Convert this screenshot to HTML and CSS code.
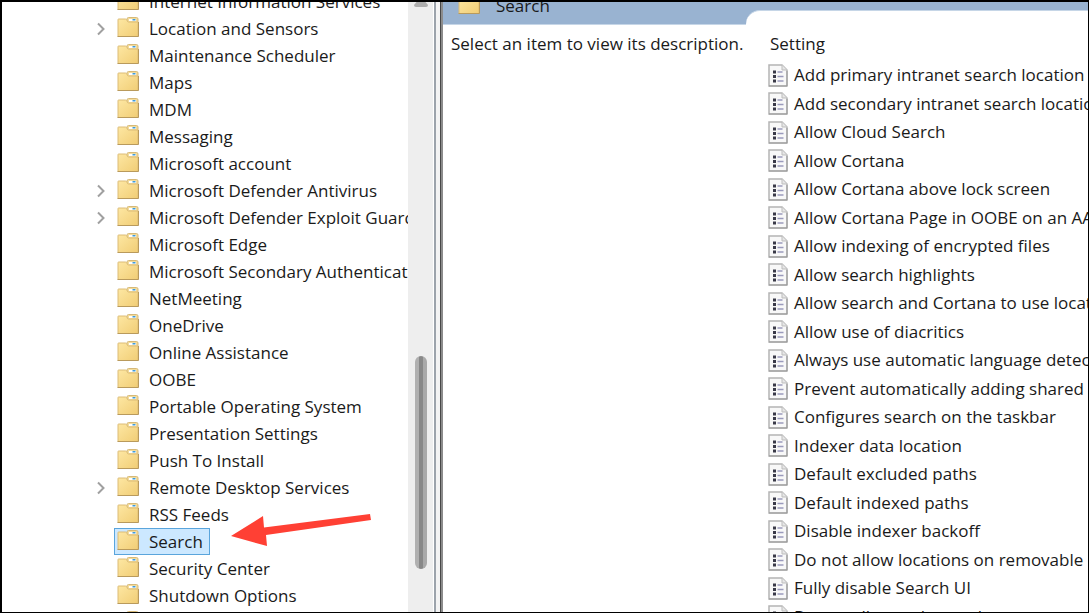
FILE: index.html
```html
<!DOCTYPE html>
<html lang="en">
<head>
  <meta charset="UTF-8">
  <title>Local Group Policy Editor</title>
  <meta name="viewport" content="width=device-width, initial-scale=1.0" />
  <link rel="stylesheet" href="styles.css">
</head>
<body>

<!-- Shared icons -->
<svg class="icon-defs" aria-hidden="true">
  <defs>
    <linearGradient id="folderFill" x1="0" y1="0" x2="1" y2="1">
      <stop offset="0" stop-color="#fde7a3" />
      <stop offset="1" stop-color="#f1cd75" />
    </linearGradient>
    <symbol id="folder" viewBox="0 0 22 20">
      <path d="M10 5V2q0-1.500 1.500-1.500h8q1.500 0 1.500 1.500v4H10z" fill="#f3dc9c" stroke="#d6b978" />
      <path d="M12 2h7v2h-7z" fill="#fff" />
      <path d="M15.500 2h3v1.500h-3z" fill="#3f9bd8" />
      <path d="M1 2.500q0-.5.5-.5h7q1 0 1.500 1.500t1.500 1.500h9.500v14.500H1z" fill="url(#folderFill)" stroke="#dcbc77" />
      <path d="M.5 19.500h21V5" fill="none" stroke="#b99a5c" />
    </symbol>
    <symbol id="policy" viewBox="0 0 20 23">
      <path d="M1 1h13l5 5v16H1z" fill="#f8f8f8" stroke="#b4b4b4" stroke-width="1.500" />
      <path d="M14 1v5h5" fill="#e6e6e6" stroke="#bdbdbd" />
      <path d="M1 22h18V7" fill="none" stroke="#999" />
      <path d="M5 6.500h3v3H5zM5 11h3v3H5zM5 15.500h3v3H5z" fill="#3a3a48" />
      <path d="M9.500 8h5M9.500 12.500h6M9.500 17h6" stroke="#9a9abc" stroke-width="1.300" />
    </symbol>
    <symbol id="chevron" viewBox="0 0 10 14">
      <path d="M2 1.500l5.500 5.500L2 12.500" fill="none" stroke="#a0a0a0" stroke-width="2" />
    </symbol>
  </defs>
</svg>

<div class="window">
  <nav class="tree-pane" aria-label="Policy folders">
    <ul class="tree">
      <li><span class="toggle"></span><a href="#"><svg class="folder"><use href="#folder" /></svg>Internet Information Services</a></li>
      <li><button class="toggle" aria-label="Expand"><svg><use href="#chevron" /></svg></button><a href="#"><svg class="folder"><use href="#folder" /></svg>Location and Sensors</a></li>
      <li><span class="toggle"></span><a href="#"><svg class="folder"><use href="#folder" /></svg>Maintenance Scheduler</a></li>
      <li><span class="toggle"></span><a href="#"><svg class="folder"><use href="#folder" /></svg>Maps</a></li>
      <li><span class="toggle"></span><a href="#"><svg class="folder"><use href="#folder" /></svg>MDM</a></li>
      <li><span class="toggle"></span><a href="#"><svg class="folder"><use href="#folder" /></svg>Messaging</a></li>
      <li><span class="toggle"></span><a href="#"><svg class="folder"><use href="#folder" /></svg>Microsoft account</a></li>
      <li><button class="toggle" aria-label="Expand"><svg><use href="#chevron" /></svg></button><a href="#"><svg class="folder"><use href="#folder" /></svg>Microsoft Defender Antivirus</a></li>
      <li><button class="toggle" aria-label="Expand"><svg><use href="#chevron" /></svg></button><a href="#"><svg class="folder"><use href="#folder" /></svg>Microsoft Defender Exploit Guard</a></li>
      <li><span class="toggle"></span><a href="#"><svg class="folder"><use href="#folder" /></svg>Microsoft Edge</a></li>
      <li><span class="toggle"></span><a href="#"><svg class="folder"><use href="#folder" /></svg>Microsoft Secondary Authentication</a></li>
      <li><span class="toggle"></span><a href="#"><svg class="folder"><use href="#folder" /></svg>NetMeeting</a></li>
      <li><span class="toggle"></span><a href="#"><svg class="folder"><use href="#folder" /></svg>OneDrive</a></li>
      <li><span class="toggle"></span><a href="#"><svg class="folder"><use href="#folder" /></svg>Online Assistance</a></li>
      <li><span class="toggle"></span><a href="#"><svg class="folder"><use href="#folder" /></svg>OOBE</a></li>
      <li><span class="toggle"></span><a href="#"><svg class="folder"><use href="#folder" /></svg>Portable Operating System</a></li>
      <li><span class="toggle"></span><a href="#"><svg class="folder"><use href="#folder" /></svg>Presentation Settings</a></li>
      <li><span class="toggle"></span><a href="#"><svg class="folder"><use href="#folder" /></svg>Push To Install</a></li>
      <li><button class="toggle" aria-label="Expand"><svg><use href="#chevron" /></svg></button><a href="#"><svg class="folder"><use href="#folder" /></svg>Remote Desktop Services</a></li>
      <li><span class="toggle"></span><a href="#"><svg class="folder"><use href="#folder" /></svg>RSS Feeds</a></li>
      <li><span class="toggle"></span><a href="#" class="selected"><svg class="folder"><use href="#folder" /></svg>Search</a></li>
      <li><span class="toggle"></span><a href="#"><svg class="folder"><use href="#folder" /></svg>Security Center</a></li>
      <li><span class="toggle"></span><a href="#"><svg class="folder"><use href="#folder" /></svg>Shutdown Options</a></li>
      <li><span class="toggle"></span><a href="#"><svg class="folder"><use href="#folder" /></svg>Smart Card</a></li>
    </ul>
  </nav>

  <div class="scrollbar">
    <svg class="scroll-up" viewBox="0 0 14 8"><path d="M5 0h4l5 6q0 2-2 2H2q-2 0-2-2z" fill="#adadad" /></svg>
    <div class="thumb"></div>
  </div>
  <div class="splitter"></div>

  <main class="details">
    <section class="description">
      <h1><svg class="folder"><use href="#folder" /></svg>Search</h1>
      <p>Select an item to view its description.</p>
    </section>

    <section class="settings">
      <table>
        <thead>
          <tr><th>Setting</th></tr>
        </thead>
        <tbody>
          <tr><td><svg><use href="#policy" /></svg>Add primary intranet search location</td></tr>
          <tr><td><svg><use href="#policy" /></svg>Add secondary intranet search locations</td></tr>
          <tr><td><svg><use href="#policy" /></svg>Allow Cloud Search</td></tr>
          <tr><td><svg><use href="#policy" /></svg>Allow Cortana</td></tr>
          <tr><td><svg><use href="#policy" /></svg>Allow Cortana above lock screen</td></tr>
          <tr><td><svg><use href="#policy" /></svg>Allow Cortana Page in OOBE on an AAD account</td></tr>
          <tr><td><svg><use href="#policy" /></svg>Allow indexing of encrypted files</td></tr>
          <tr><td><svg><use href="#policy" /></svg>Allow search highlights</td></tr>
          <tr><td><svg><use href="#policy" /></svg>Allow search and Cortana to use location</td></tr>
          <tr><td><svg><use href="#policy" /></svg>Allow use of diacritics</td></tr>
          <tr><td><svg><use href="#policy" /></svg>Always use automatic language detection</td></tr>
          <tr><td><svg><use href="#policy" /></svg>Prevent automatically adding shared folders</td></tr>
          <tr><td><svg><use href="#policy" /></svg>Configures search on the taskbar</td></tr>
          <tr><td><svg><use href="#policy" /></svg>Indexer data location</td></tr>
          <tr><td><svg><use href="#policy" /></svg>Default excluded paths</td></tr>
          <tr><td><svg><use href="#policy" /></svg>Default indexed paths</td></tr>
          <tr><td><svg><use href="#policy" /></svg>Disable indexer backoff</td></tr>
          <tr><td><svg><use href="#policy" /></svg>Do not allow locations on removable drives</td></tr>
          <tr><td><svg><use href="#policy" /></svg>Fully disable Search UI</td></tr>
          <tr><td><svg><use href="#policy" /></svg>Do not allow web search</td></tr>
        </tbody>
      </table>
    </section>
  </main>

  <!-- Arrow pointing at the selected folder -->
  <svg class="pointer" viewBox="0 0 140 32" aria-hidden="true">
    <path d="M0 21L32 1l1 11.500L139 -1l1 6L35 20l1 11z" fill="#ff4034" />
  </svg>
</div>

</body>
</html>
```
FILE: styles.css
```css
/* ============================
   Base Styling
============================ */
* {
  box-sizing: border-box;
}

body {
  font-family: "Open Sans", "Noto Sans", sans-serif;
  font-size: 17px;
  line-height: 22px;
  margin: 0;
  background: #fff;
  color: #1a1a1a;
}

.icon-defs {
  position: absolute;
  width: 0;
  height: 0;
}

.window {
  position: relative;
  display: flex;
  height: 100vh;
  overflow: hidden;
  border: 1px solid #000;
  border-top-width: 2px;
  border-left-width: 2px;
}

/* ============================
   Folder Tree
============================ */
.tree-pane {
  flex: 0 0 406px;
  overflow: hidden;
}

.tree {
  list-style: none;
  margin: -14px 0 0;
  padding: 0 0 0 89px;
}

.tree li {
  display: flex;
  align-items: center;
  height: 27px;
  white-space: nowrap;
}

.toggle {
  flex: 0 0 23px;
  height: 14px;
  padding: 0;
  border: none;
  background: none;
  text-align: left;
}

.toggle svg {
  display: block;
  width: 10px;
  height: 14px;
  margin-left: 5px;
}

.tree a {
  display: flex;
  align-items: center;
  height: 27px;
  padding: 0 6px 0 2px;
  border: 1px solid transparent;
  color: inherit;
  text-decoration: none;
}

.tree a.selected {
  background: #cce8ff;
  border-color: #5aa5dc;
}

.folder {
  flex: none;
  width: 22px;
  height: 20px;
  margin: 0 10px 4px 0;
}

/* ============================
   Scrollbar and Splitter
============================ */
.scrollbar {
  flex: 0 0 25px;
  display: flex;
  flex-direction: column;
  align-items: center;
  background: #eee;
}

.scroll-up {
  width: 14px;
  height: 8px;
  margin-top: -3px;
}

.thumb {
  width: 12px;
  height: 35%;
  margin-top: auto;
  margin-bottom: 43px;
  border-radius: 6px;
  background: linear-gradient(to right, #b0b0b0 30%, #888 30%, #888 65%, #a9a9a9 65%);
}

.splitter {
  flex: 0 0 10px;
  border-left: 1px solid #fff;
  background: linear-gradient(to right, #9ca3ab 2px, #f3f3f3 2px, #f3f3f3 6px, #484848 6px, #484848 7px, #8c8c8c 7px);
}

/* ============================
   Details Pane
============================ */
.details {
  flex: 1;
  display: grid;
  grid-template-columns: 303px 1fr;
  min-width: 0;
  background: linear-gradient(#99b3d1 22px, #fff 22px);
}

.description h1 {
  display: flex;
  align-items: center;
  height: 23px;
  margin: 0;
  padding: 0 0 14px 15px;
  border-bottom: 1px solid #c6d6e7;
  font-size: 17px;
  font-weight: normal;
}

.description h1 .folder {
  margin-right: 16px;
}

.description p {
  margin: 0;
  padding: 8px;
  white-space: nowrap;
}

.settings {
  overflow: hidden;
  margin-top: 8px;
  border-top: 1px solid #c6d6e7;
  border-top-left-radius: 14px;
  background: #fff;
}

.settings table {
  border-collapse: collapse;
  white-space: nowrap;
}

.settings th {
  height: 50px;
  padding: 22px 0 0 24px;
  font-weight: normal;
  text-align: left;
  vertical-align: top;
}

.settings td {
  height: 28px;
  padding: 0 0 0 22px;
}

.settings tr:nth-child(odd) td {
  height: 29px;
}

.settings td svg {
  width: 20px;
  height: 23px;
  margin: -2px 6px 0 0;
  vertical-align: middle;
}

/* ============================
   Pointer Arrow
============================ */
.pointer {
  position: absolute;
  top: 513px;
  left: 229px;
  width: 140px;
  height: 32px;
  overflow: visible;
}
```
